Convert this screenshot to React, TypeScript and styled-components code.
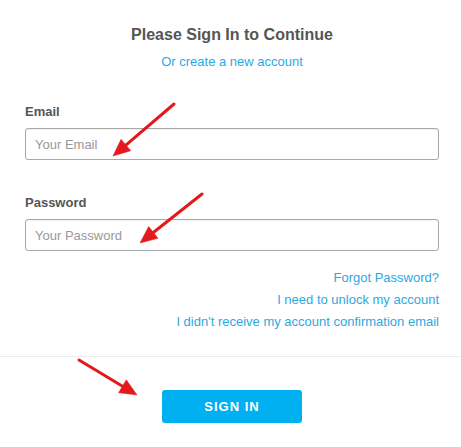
import React from "react";
import styled, { createGlobalStyle } from "styled-components";

const Global = createGlobalStyle`
  html, body { margin: 0; padding: 0; background: #fff; }
  body { font-family: "Liberation Sans", Arial, sans-serif; }
  * { box-sizing: border-box; }
`;

const Page = styled.div`
  position: relative;
  width: 461px;
  height: 447px;
  overflow: hidden;
  background: #fff;
`;

const Form = styled.form`
  display: flex;
  flex-direction: column;
  padding: 25px 22px 0 25px;
`;

const Header = styled.div`
  display: flex;
  flex-direction: column;
  align-items: center;
  gap: 8px;
`;

const Title = styled.h2`
  margin: 0;
  font-size: 16px;
  line-height: 20px;
  font-weight: bold;
  color: #555;
`;

const Link = styled.a`
  font-size: 13px;
  line-height: 18px;
  color: #2ea8df;
  text-decoration: none;
  cursor: pointer;
`;

const Field = styled.div<{ $top: number }>`
  display: flex;
  flex-direction: column;
  gap: 7px;
  margin-top: ${(p) => p.$top}px;
`;

const Label = styled.label`
  font-size: 13px;
  line-height: 18px;
  font-weight: bold;
  color: #555;
`;

const Input = styled.input`
  height: 32px;
  width: 100%;
  padding: 0 9px;
  border: 1px solid #a9a9a9;
  border-radius: 3px;
  font-family: "Liberation Sans", Arial, sans-serif;
  font-size: 13px;
  color: #333;
  background: #fff;
  box-shadow: inset 0 1px 2px rgba(0, 0, 0, 0.06);
  outline: none;
  &::placeholder { color: #999; }
`;

const Links = styled.div`
  display: flex;
  flex-direction: column;
  align-items: flex-end;
  margin-top: 16px;
  ${Link} { line-height: 22px; }
`;

const Divider = styled.hr`
  margin: 23px 0 0;
  border: 0;
  border-top: 1px solid #ebebeb;
  height: 0;
`;

const Footer = styled.div`
  display: flex;
  justify-content: center;
  padding: 33px 22px 0 25px;
`;

const Button = styled.button`
  width: 140px;
  height: 33px;
  border: 0;
  border-radius: 3px;
  background: #00b0f0;
  color: #fff;
  font-family: "Liberation Sans", Arial, sans-serif;
  font-size: 13px;
  font-weight: bold;
  letter-spacing: 1px;
  cursor: pointer;
`;

const Overlay = styled.svg`
  position: absolute;
  inset: 0;
  pointer-events: none;
`;

type ArrowProps = { x1: number; y1: number; x2: number; y2: number };

const Arrow = ({ x1, y1, x2, y2 }: ArrowProps) => {
  const dx = x2 - x1;
  const dy = y2 - y1;
  const len = Math.hypot(dx, dy);
  const ux = dx / len;
  const uy = dy / len;
  const headLen = 17;
  const half = 7.5;
  const bx = x2 - ux * headLen;
  const by = y2 - uy * headLen;
  const px = -uy * half;
  const py = ux * half;
  return (
    <g fill="#e3191b" stroke="#e3191b">
      <line x1={x1} y1={y1} x2={bx + ux * 2} y2={by + uy * 2} strokeWidth={3} strokeLinecap="round" />
      <polygon
        points={`${x2},${y2} ${bx + px},${by + py} ${bx - px},${by - py}`}
        strokeWidth={0.5}
        strokeLinejoin="round"
      />
    </g>
  );
};

export default function App() {
  return (
    <>
      <Global />
      <Page>
        <Form onSubmit={(e) => e.preventDefault()}>
          <Header>
            <Title>Please Sign In to Continue</Title>
            <Link>Or create a new account</Link>
          </Header>
          <Field $top={32}>
            <Label htmlFor="email">Email</Label>
            <Input id="email" type="email" placeholder="Your Email" />
          </Field>
          <Field $top={34}>
            <Label htmlFor="password">Password</Label>
            <Input id="password" type="password" placeholder="Your Password" />
          </Field>
          <Links>
            <Link>Forgot Password?</Link>
            <Link>I need to unlock my account</Link>
            <Link>I didn't receive my account confirmation email</Link>
          </Links>
        </Form>
        <Divider />
        <Footer>
          <Button type="button">SIGN IN</Button>
        </Footer>
        <Overlay width={461} height={447} viewBox="0 0 461 447">
          <Arrow x1={174} y1={104} x2={113} y2={156} />
          <Arrow x1={202} y1={194} x2={140} y2={243} />
          <Arrow x1={79} y1={360} x2={137} y2={395} />
        </Overlay>
      </Page>
    </>
  );
}
